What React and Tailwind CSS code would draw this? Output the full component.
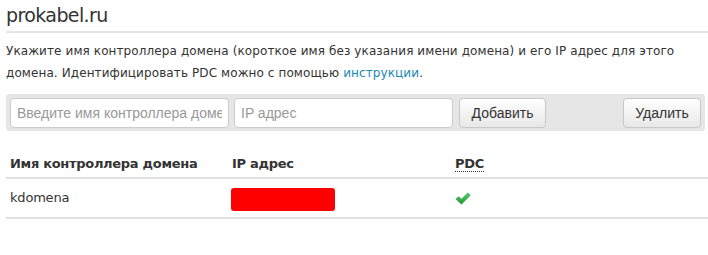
import React from 'react';

const CheckIcon = () => (
  <svg width="16" height="13" viewBox="0 0 15 12" className="block">
    <defs>
      <linearGradient id="chk" x1="0" y1="0" x2="0" y2="1">
        <stop offset="0" stopColor="#5ad06a" />
        <stop offset="1" stopColor="#1e9a32" />
      </linearGradient>
    </defs>
    <path d="M1 6.5 L3.5 4.3 L6 6.8 L12 0.8 L14.3 3 L6 11.3 Z" fill="url(#chk)" stroke="#1f8a2e" strokeWidth="0.6" />
  </svg>
);

const App = () => {
  const rows = [{ name: 'kdomena', pdc: true }];

  return (
    <div className="min-h-screen bg-white text-[#333] pl-[6px]" style={{ fontFamily: '"DejaVu Sans", Verdana, sans-serif' }}>
      {/* Header */}
      <h1 className="pt-[3px] pb-[4px] text-[19px] leading-[24px] border-b-2 border-[#e5e5e5] tracking-[-0.6px]">
        prokabel.ru
      </h1>

      <p className="mt-[7px] text-[12px] leading-[22px] tracking-[0.1px]">
        Укажите имя контроллера домена (короткое имя без указания имени домена) и его IP адрес для этого
        домена. Идентифицировать PDC можно с помощью <a href="#" className="text-[#1a88b5]">инструкции</a>.
      </p>

      {/* Toolbar */}
      <div
        className="mt-[10px] mr-[3px] flex items-center bg-[#e6e6e6] rounded-[3px] pt-[4px] pb-[3px] pl-[4px] pr-[4px]"
        style={{ fontFamily: '"Liberation Sans", Arial, sans-serif' }}
      >
        <input
          className="w-[219px] h-[30px] px-[6px] bg-white border border-[#ccc] rounded-[4px] text-[14px] placeholder-[#999] outline-none"
          placeholder="Введите имя контроллера домена"
        />
        <input
          className="ml-[5px] w-[219px] h-[30px] px-[6px] bg-white border border-[#ccc] rounded-[4px] text-[14px] placeholder-[#999] outline-none"
          placeholder="IP адрес"
        />
        <button className="ml-[6px] w-[87px] h-[30px] border border-[#c8c8c8] rounded-[4px] bg-gradient-to-b from-white to-[#e8e8e8] text-[14px] text-[#333]">
          Добавить
        </button>
        <button className="ml-auto w-[78px] h-[30px] border border-[#c8c8c8] rounded-[4px] bg-gradient-to-b from-white to-[#e8e8e8] text-[14px] text-[#333]">
          Удалить
        </button>
      </div>

      {/* Table */}
      <table className="mt-[19px] w-full border-collapse text-[13px]">
        <thead>
          <tr className="border-b-2 border-[#e0e0e0]">
            <th className="w-[222px] h-[28px] pl-[4px] text-left font-bold text-[13px] tracking-[-0.3px]">Имя контроллера домена</th>
            <th className="w-[223px] pl-[4px] text-left font-bold tracking-[-0.3px]">IP адрес</th>
            <th className="pl-[4px] text-left font-bold">
              <abbr title="Primary Domain Controller" className="no-underline border-b border-dotted border-[#333] tracking-[-0.3px]">PDC</abbr>
            </th>
          </tr>
        </thead>
        <tbody>
          {rows.map((row, i) => (
            <tr key={i} className="border-b-2 border-[#e0e0e0]">
              <td className="h-[40px] pl-[4px] tracking-[-0.2px]">{row.name}</td>
              <td className="pl-[3px]">
                <div className="w-[104px] h-[23px] bg-[#ff0000] rounded-[3px] mt-[2px]"></div>
              </td>
              <td className="pl-[4px]">{row.pdc && <CheckIcon />}</td>
            </tr>
          ))}
        </tbody>
      </table>
    </div>
  );
};

export default App;
